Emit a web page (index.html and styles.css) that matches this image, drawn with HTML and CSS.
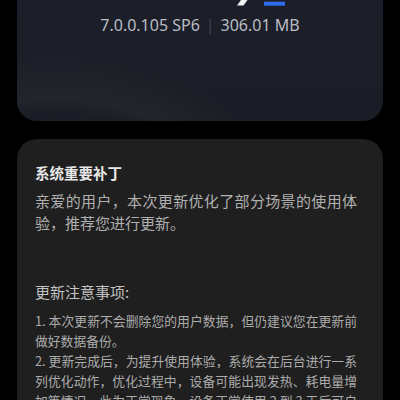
FILE: index.html
```html
<!DOCTYPE html>
<html lang="zh-CN">
<head>
<meta charset="utf-8">
<link rel="stylesheet" href="styles.css">
</head>
<body>
<div class="page">
  <section class="hero">
    <div class="mark">
      <svg width="366" height="7" viewBox="0 0 366 7">
        <polygon points="224,0 230.5,0 226.5,5.5 220,5.5" fill="#f2f2f2"/>
        <rect x="247" y="1.7" width="21" height="4" fill="#2f6cf0"/>
      </svg>
    </div>
    <p class="version">7.0.0.105 SP6<span class="sep">|</span>306.01 MB</p>
  </section>
  <section class="notes">
    <h2 class="title">系统重要补丁</h2>
    <p class="intro">亲爱的用户，本次更新优化了部分场景的使用体验，推荐您进行更新。</p>
    <h3 class="heading">更新注意事项:</h3>
    <p class="item">1. 本次更新不会删除您的用户数据，但仍建议您在更新前做好数据备份。</p>
    <p class="item item-long">2. 更新完成后，为提升使用体验，系统会在后台进行一系<br>列优化动作，优化过程中，设备可能出现发热、耗电量增<br>加等情况，此为正常现象，设备正常使用 2 到 3 天后可自<br>行恢复。</p>
  </section>
</div>
</body>
</html>
```
FILE: styles.css
```css
html, body {
  margin: 0;
  padding: 0;
  background: #000;
}
body {
  font-family: "Noto Sans CJK SC", "Noto Sans", sans-serif;
  overflow: hidden;
  height: 400px;
}
.page {
  padding: 0 17px;
  display: flex;
  flex-direction: column;
  gap: 18px;
}
.hero {
  height: 121px;
  border-radius: 0 0 20px 20px;
  background:
    radial-gradient(circle at 40px 330px, rgba(255,255,255,0) 215px, rgba(255,255,255,0.035) 232px, rgba(255,255,255,0) 280px),
    linear-gradient(180deg, #1c1f29 0%, #1a1d25 100%);
  display: flex;
  flex-direction: column;
}
.mark {
  height: 7px;
  line-height: 0;
}
.mark svg { display: block; }
.version {
  margin: 8px 0 0;
  text-align: center;
  font-family: "Noto Sans", "Noto Sans CJK SC", sans-serif;
  font-size: 16px;
  line-height: 20px;
  color: #b9bcc5;
}
.sep {
  color: #4e525c;
  margin: 0 6px;
  font-weight: 300;
}
.notes {
  background: #1f1f1f;
  border-radius: 20px 20px 0 0;
  padding: 23px 26px 0 18px;
  min-height: 300px;
}
.title {
  margin: 0;
  font-size: 14.5px;
  line-height: 22px;
  font-weight: 700;
  color: #e8e8e8;
}
.intro {
  margin: 6px 0 0;
  font-size: 15px;
  line-height: 22px;
  color: #b0b0b0;
  text-align: justify;
}
.heading {
  margin: 47px 0 0;
  font-size: 15px;
  line-height: 22px;
  font-weight: 400;
  color: #c2c2c2;
}
.item {
  margin: 0;
  font-size: 12.8px;
  line-height: 20px;
  color: #acacac;
  text-align: justify;
}
.heading + .item {
  margin-top: 8px;
}
.item-long {
  text-align-last: justify;
}
```
